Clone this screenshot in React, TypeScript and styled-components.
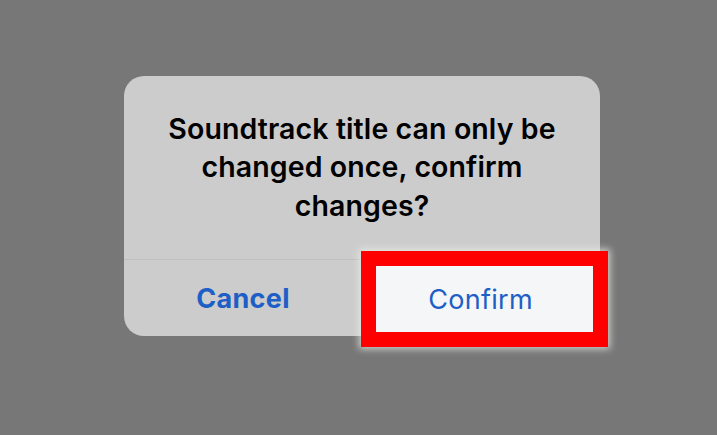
import React from "react";
import styled, { createGlobalStyle } from "styled-components";

const Global = createGlobalStyle`
  html, body { margin: 0; padding: 0; background: #777777; }
  body { font-family: Inter, "Liberation Sans", sans-serif; }
`;

const Page = styled.div`
  width: 717px;
  height: 435px;
  box-sizing: border-box;
  padding: 76px 0 0 124px;
  background: #777777;
`;

const Dialog = styled.div`
  width: 476px;
  height: 260px;
  border-radius: 20px;
  background: #cccccc;
  display: flex;
  flex-direction: column;
`;

const Message = styled.div`
  height: 183px;
  box-sizing: border-box;
  padding: 0 40px;
  display: flex;
  align-items: center;
  justify-content: center;
  text-align: center;
  color: #000;
  font-size: 28.5px;
  font-weight: 600;
  line-height: 38.5px;
  letter-spacing: 0.1px;
`;

const Divider = styled.div`
  height: 1px;
  background: #bfbfbf;
`;

const Actions = styled.div`
  flex: 1;
  display: grid;
  grid-template-columns: 1fr 1fr;
`;

const Action = styled.div<{ $bold?: boolean }>`
  position: relative;
  display: flex;
  align-items: center;
  justify-content: center;
  color: #1d5fc6;
  font-size: 27px;
  font-weight: ${(p) => (p.$bold ? 700 : 400)};
  letter-spacing: 0.3px;
`;

const Highlight = styled.div`
  position: absolute;
  left: -1px;
  top: -9px;
  width: 247px;
  height: 96px;
  box-sizing: border-box;
  border: 15px solid #ff0000;
  background: #f5f6f8;
  box-shadow: 0 0 7px 2px rgba(235, 240, 232, 0.75);
  display: flex;
  align-items: center;
  justify-content: center;
  padding-right: 8px;
  padding-top: 1px;
`;

export default function App() {
  return (
    <>
      <Global />
      <Page>
        <Dialog>
          <Message>
            Soundtrack title can only be changed once, confirm changes?
          </Message>
          <Divider />
          <Actions>
            <Action $bold>Cancel</Action>
            <Action>
              <Highlight>Confirm</Highlight>
            </Action>
          </Actions>
        </Dialog>
      </Page>
    </>
  );
}
